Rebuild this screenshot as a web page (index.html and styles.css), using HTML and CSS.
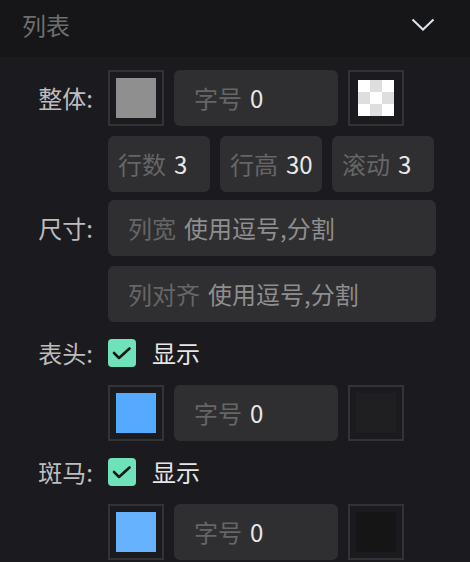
FILE: index.html
```html
<!DOCTYPE html>
<html lang="zh">
<head>
<meta charset="utf-8">
<link rel="stylesheet" href="styles.css">
</head>
<body>
<div class="panel">
  <div class="header">
    <span class="title">列表</span>
    <svg class="chevron" width="24" height="14" viewBox="0 0 24 14"><polyline points="1.5,1.5 12,11.5 22.5,1.5" fill="none" stroke="#dfe4ec" stroke-width="2"/></svg>
  </div>
  <div class="body">
    <div class="item">
      <div class="row">
        <div class="label">整体:</div>
        <div class="content">
          <div class="swatch"><div class="fill gray"></div></div>
          <div class="field font"><span class="pre">字号</span><span class="val">0</span></div>
          <div class="swatch"><div class="checker"><i></i><i class="g"></i><i></i><i class="g"></i><i></i><i class="g"></i><i></i><i class="g"></i><i></i></div></div>
        </div>
      </div>
      <div class="row">
        <div class="label"></div>
        <div class="content triple">
          <div class="field small"><span class="pre">行数</span><span class="val">3</span></div>
          <div class="field small"><span class="pre">行高</span><span class="val">30</span></div>
          <div class="field small"><span class="pre">滚动</span><span class="val">3</span></div>
        </div>
      </div>
    </div>
    <div class="item">
      <div class="row">
        <div class="label">尺寸:</div>
        <div class="content">
          <div class="field wide"><span class="pre">列宽</span><span class="ph">使用逗号,分割</span></div>
        </div>
      </div>
      <div class="row">
        <div class="label"></div>
        <div class="content">
          <div class="field wide"><span class="pre">列对齐</span><span class="ph">使用逗号,分割</span></div>
        </div>
      </div>
    </div>
    <div class="item">
      <div class="row check-row">
        <div class="label">表头:</div>
        <div class="content">
          <span class="checkbox"><svg width="28" height="28" viewBox="0 0 28 28"><polyline points="6,14 11,19 21.5,9.5" fill="none" stroke="#18181a" stroke-width="2.6" stroke-linecap="round" stroke-linejoin="round"/></svg></span>
          <span class="check-text">显示</span>
        </div>
      </div>
      <div class="row">
        <div class="label"></div>
        <div class="content">
          <div class="swatch"><div class="fill blue"></div></div>
          <div class="field font"><span class="pre">字号</span><span class="val">0</span></div>
          <div class="swatch"><div class="fill dark1"></div></div>
        </div>
      </div>
    </div>
    <div class="item">
      <div class="row check-row">
        <div class="label">斑马:</div>
        <div class="content">
          <span class="checkbox"><svg width="28" height="28" viewBox="0 0 28 28"><polyline points="6,14 11,19 21.5,9.5" fill="none" stroke="#18181a" stroke-width="2.6" stroke-linecap="round" stroke-linejoin="round"/></svg></span>
          <span class="check-text">显示</span>
        </div>
      </div>
      <div class="row">
        <div class="label"></div>
        <div class="content">
          <div class="swatch"><div class="fill blue2"></div></div>
          <div class="field font"><span class="pre">字号</span><span class="val">0</span></div>
          <div class="swatch"><div class="fill dark2"></div></div>
        </div>
      </div>
    </div>
  </div>
</div>
</body>
</html>
```
FILE: styles.css
```css
* { box-sizing: border-box; }
html, body {
  margin: 0;
  padding: 0;
  background: #1b1a1f;
  font-family: "Noto Sans CJK SC", "Noto Sans", sans-serif;
  font-size: 24px;
  overflow: hidden;
}
.panel {
  width: 470px;
  height: 562px;
}
.header {
  height: 57px;
  background: #161618;
  display: flex;
  align-items: center;
  justify-content: space-between;
  padding: 0 35px 0 22px;
}
.title {
  color: #6e6e6e;
  line-height: 1;
  margin-top: -7px;
}
.chevron {
  display: block;
  margin-top: -8px;
}
.body {
  padding-top: 13px;
  display: flex;
  flex-direction: column;
  gap: 8px;
}
.item {
  display: flex;
  flex-direction: column;
  gap: 10px;
}
.row {
  display: flex;
  align-items: center;
  height: 56px;
}
.check-row {
  height: 45px;
}
.label {
  width: 108px;
  flex: none;
  text-align: right;
  padding-right: 15px;
  color: #bdbdbd;
  line-height: 1;
}
.content {
  display: flex;
  align-items: center;
  gap: 10px;
  height: 100%;
}
.triple {
  display: grid;
  grid-template-columns: repeat(3, 102px);
  gap: 10px;
}
.swatch {
  width: 56px;
  height: 56px;
  border: 2px solid #333336;
  padding: 6px;
}
.fill {
  width: 40px;
  height: 40px;
}
.gray { background: #8f8f8f; }
.blue { background: #55aaff; }
.blue2 { background: #66b2ff; }
.dark1 { background: #1f1f22; }
.dark2 { background: #151516; }
.checker {
  margin: 2px;
  width: 36px;
  height: 36px;
  display: grid;
  grid-template-columns: repeat(3, 12px);
  grid-template-rows: repeat(3, 12px);
}
.checker i { background: #ffffff; }
.checker i.g { background: #dedede; }
.field {
  height: 56px;
  background: #2f2f31;
  border-radius: 6px;
  display: flex;
  align-items: center;
  padding-left: 20px;
  line-height: 1;
  white-space: nowrap;
}
.font { width: 164px; }
.small { padding-left: 10px; }
.wide { width: 328px; }
.pre { color: #666666; margin-right: 8px; }
.val { color: #e8e8e8; }
.ph { color: #8e8e8e; }
.checkbox {
  width: 28px;
  height: 28px;
  border-radius: 4px;
  background: #6fe2b9;
  display: block;
  flex: none;
}
.checkbox svg { display: block; }
.check-text {
  color: #e6e6e6;
  margin-left: 6px;
  line-height: 1;
}
```
